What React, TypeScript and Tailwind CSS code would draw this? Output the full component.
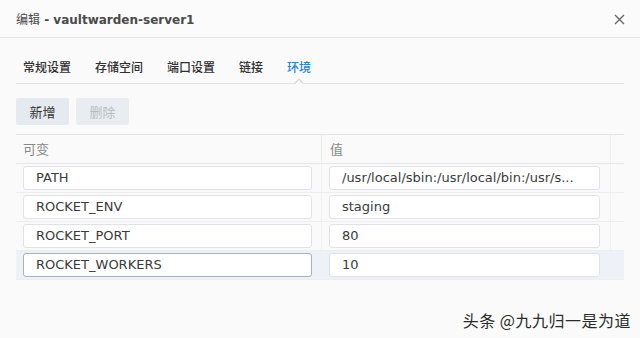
import React from "react";

const rows = [
  { k: "PATH", v: "/usr/local/sbin:/usr/local/bin:/usr/s..." },
  { k: "ROCKET_ENV", v: "staging" },
  { k: "ROCKET_PORT", v: "80" },
  { k: "ROCKET_WORKERS", v: "10" },
];

const tabs = ["常规设置", "存储空间", "端口设置", "链接", "环境"];

export default function App() {
  return (
    <div
      className="relative w-[640px] h-[338px] overflow-hidden bg-[#fafafa] text-[#333]"
      style={{ fontFamily: '"DejaVu Sans", "Noto Sans CJK SC", sans-serif' }}
    >
      {/* title bar */}
      <div className="h-[38px] flex items-center justify-between pl-4 pr-[15px] border-b border-[#e6e6e6] bg-[#fbfbfc]">
        <div className="text-[12px] font-bold text-[#4a4a4a] leading-none pt-[1px]">
          <span style={{ fontFamily: '"Noto Sans CJK SC", sans-serif' }} className="font-normal text-[12px]">编辑</span>
          <span> - vaultwarden-server1</span>
        </div>
        <svg width="11" height="11" viewBox="0 0 11 11" className="mt-[1px]">
          <path d="M1 1 L10 10 M10 1 L1 10" stroke="#666" strokeWidth="1.4" />
        </svg>
      </div>

      {/* tabs */}
      <div className="relative mx-4 h-[46px] border-b border-[#e0e0e0] flex items-start gap-6 pl-[7px] pt-[20px]">
        {tabs.map((t, i) => (
          <div
            key={t}
            className={`relative text-[12px] leading-[17px] font-medium ${i === 4 ? "text-[#2d7fd0]" : "text-[#2f2f2f]"}`}
            style={{ fontFamily: '"Noto Sans CJK SC", sans-serif' }}
          >
            {t}
            {i === 4 && (
              <div className="absolute left-1/2 -translate-x-1/2 top-[22px] w-[7px] h-[7px] rotate-45 border-l border-t border-[#d0d0d0] bg-[#fafafa]" />
            )}
          </div>
        ))}
      </div>

      {/* buttons */}
      <div className="flex gap-[7px] ml-4 mt-[14px]">
        <div
          className="w-[53px] h-[27px] rounded-[2px] bg-[#e5eaf0] flex items-center justify-center text-[13px] text-[#333]"
          style={{ fontFamily: '"Noto Sans CJK SC", sans-serif' }}
        >
          新增
        </div>
        <div
          className="w-[53px] h-[27px] rounded-[2px] bg-[#e9edf2] flex items-center justify-center text-[13px] text-[#b8bcc2]"
          style={{ fontFamily: '"Noto Sans CJK SC", sans-serif' }}
        >
          删除
        </div>
      </div>

      {/* table */}
      <div className="mx-4 mt-[9px] border-t border-[#e3e3e3]">
        <div className="flex h-[29px] border-b border-[#e6e6e6]">
          <div
            className="w-[306px] border-r border-[#ececec] pl-[7px] flex items-center text-[13px] text-[#888]"
            style={{ fontFamily: '"Noto Sans CJK SC", sans-serif' }}
          >
            可变
          </div>
          <div
            className="w-[289px] border-r border-[#ececec] pl-[8px] flex items-center text-[13px] text-[#888]"
            style={{ fontFamily: '"Noto Sans CJK SC", sans-serif' }}
          >
            值
          </div>
          <div className="flex-1" />
        </div>
        {rows.map((r, i) => {
          const last = i === rows.length - 1;
          return (
            <div
              key={r.k}
              className={`flex h-[29px] border-b border-[#ededed] ${last ? "bg-[#eef2f8]" : ""}`}
            >
              <div className="w-[306px] border-r border-[#f0f0f0] pl-[7px] pr-[9px] flex items-center">
                <div
                  className={`w-full h-[24px] rounded-[3px] bg-white border ${last ? "border-[#aab1ba]" : "border-[#dfe3e8]"} pl-[12px] flex items-center text-[13px] text-[#3a3a3a]`}
                >
                  {r.k}
                </div>
              </div>
              <div className="w-[289px] border-r border-[#f0f0f0] pl-[7px] pr-[10px] flex items-center">
                <div className="w-full h-[24px] rounded-[3px] bg-white border border-[#dfe3e8] pl-[12px] flex items-center text-[13px] text-[#3a3a3a] whitespace-nowrap overflow-hidden">
                  {r.v}
                </div>
              </div>
              <div className="flex-1" />
            </div>
          );
        })}
      </div>

      {/* watermark */}
      <div
        className="absolute right-[9px] top-[309px] text-[16px] leading-[22px] tracking-[0.5px] text-[#2a2a2a]"
        style={{ fontFamily: '"Noto Sans CJK SC", sans-serif', textShadow: "0 0 2px #fff" }}
      >
        头条 @九九归一是为道
      </div>
    </div>
  );
}
